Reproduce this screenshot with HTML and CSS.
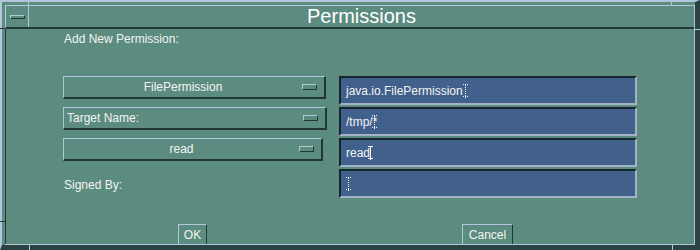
FILE: index.html
```html
<!DOCTYPE html>
<html lang="en">
<head>
  <meta charset="UTF-8" />
  <title>Permissions</title>
  <link rel="stylesheet" href="styles.css">
</head>
<body>

  <div class="frame">
    <!-- resize handle marks on the window frame -->
    <span class="notch notch-top notch-top-left"></span>
    <span class="notch notch-top notch-top-right"></span>
    <span class="notch notch-left notch-left-top"></span>
    <span class="notch notch-left notch-left-bottom"></span>
    <span class="notch notch-right notch-right-top"></span>
    <span class="notch notch-bottom notch-bottom-left"></span>
    <span class="notch notch-bottom notch-bottom-right"></span>

    <div class="inner">
      <div class="titlebar">
        <div class="menu-btn"><span class="menu-glyph"></span></div>
        <div class="title">Permissions</div>
      </div>

      <div class="client">
        <div class="heading">Add New Permission:</div>

        <div class="form-grid">
          <div class="option option-wide">
            <span class="option-label">FilePermission</span>
            <span class="indicator"></span>
          </div>
          <div class="field">
            <span class="field-text">java.io.FilePermission</span><span class="caret dotted"></span>
          </div>

          <div class="option option-wider">
            <span class="option-label left">Target Name:</span>
            <span class="indicator"></span>
          </div>
          <div class="field">
            <span class="field-text">/tmp/*</span><span class="caret dotted overlap"></span>
          </div>

          <div class="option option-narrow">
            <span class="option-label">read</span>
            <span class="indicator"></span>
          </div>
          <div class="field">
            <span class="field-text">read</span><span class="caret solid"></span>
          </div>

          <div class="label">Signed By:</div>
          <div class="field">
            <span class="caret dotted"></span>
          </div>
        </div>

        <div class="actions">
          <button class="btn btn-ok">OK</button>
          <button class="btn btn-cancel">Cancel</button>
        </div>
      </div>
    </div>
  </div>

</body>
</html>
```

FILE: styles.css
```css
/* Basic reset */
* {
  margin: 0;
  padding: 0;
  box-sizing: border-box;
}

body {
  font-family: "Liberation Sans", Arial, sans-serif;
  color: #f4f4f4;
  background: #2c4444;
}

/* Window frame */
.frame {
  position: relative;
  width: 700px;
  height: 250px;
  border-style: solid;
  border-width: 2px 5px 5px 2px;
  border-color: #b2c6dc #2a4242 #2a4242 #b2c6dc;
  padding: 3px 0 0 3px;
  background: #5b8c7f;
}

.notch {
  position: absolute;
  display: block;
}

.notch-top {
  top: -2px;
  width: 1px;
  height: 5px;
  background: #b2c6dc;
}

.notch-top-left {
  left: 26px;
}

.notch-top-right {
  left: 669px;
}

.notch-left {
  left: -2px;
  width: 5px;
  height: 1px;
  background: #223636;
}

.notch-left-top {
  top: 26px;
}

.notch-left-bottom {
  top: 219px;
}

.notch-right {
  right: -5px;
  width: 5px;
  height: 1px;
  background: #b2c6dc;
}

.notch-right-top {
  top: 27px;
}

.notch-bottom {
  bottom: -5px;
  width: 1px;
  height: 5px;
  background: #b2c6dc;
}

.notch-bottom-left {
  left: 27px;
}

.notch-bottom-right {
  left: 670px;
}

.inner {
  height: 100%;
  display: flex;
  flex-direction: column;
  border-right: 1px solid #b2c6dc;
  border-bottom: 1px solid #b2c6dc;
}

/* Title bar */
.titlebar {
  display: flex;
  height: 24px;
  border-top: 1px solid #b2c6dc;
  border-left: 1px solid #b2c6dc;
  border-bottom: 2px solid #223636;
}

.menu-btn {
  width: 23px;
  display: flex;
  align-items: center;
  justify-content: center;
  border-right: 1px solid #b2c6dc;
}

.menu-glyph {
  width: 15px;
  height: 4px;
  border: 1px solid;
  border-color: #b2c6dc #223636 #223636 #b2c6dc;
}

.title {
  flex: 1;
  text-align: center;
  font-size: 20px;
  line-height: 21px;
  color: #ffffff;
}

/* Dialog body */
.client {
  flex: 1;
  display: flex;
  flex-direction: column;
  border-left: 1px solid #223636;
  padding: 3px 0 0 57px;
  font-size: 12px;
}

.heading {
  padding-left: 1px;
  line-height: 14px;
}

.form-grid {
  margin-top: 30px;
  display: grid;
  grid-template-columns: 264px 298px;
  grid-auto-rows: 29px;
  column-gap: 12px;
  row-gap: 2px;
}

/* Option menus */
.option {
  align-self: start;
  height: 23px;
  display: flex;
  align-items: center;
  border-style: solid;
  border-width: 1px 2px 2px 1px;
  border-color: #b2c6dc #223636 #223636 #b2c6dc;
}

.option-wide {
  width: 263px;
}

.option-wider {
  width: 264px;
}

.option-narrow {
  width: 260px;
}

.option-label {
  flex: 1;
  text-align: center;
  white-space: nowrap;
}

.option-label.left {
  text-align: left;
  padding-left: 3px;
}

.indicator {
  width: 15px;
  height: 6px;
  margin-right: 7px;
  border: 1px solid;
  border-color: #b2c6dc #223636 #223636 #b2c6dc;
}

.label {
  align-self: center;
  padding-left: 1px;
  padding-top: 3px;
}

/* Text fields */
.field {
  display: flex;
  align-items: center;
  padding-left: 5px;
  border-style: solid;
  border-width: 2px;
  border-color: #16242e #a4b2c4 #a4b2c4 #16242e;
  background: #41608b;
  white-space: nowrap;
}

.caret {
  position: relative;
  display: inline-block;
  width: 5px;
  height: 13px;
}

.caret::before {
  content: "";
  position: absolute;
  left: 2px;
  top: 0;
  width: 1px;
  height: 13px;
}

.caret.dotted::before {
  background: repeating-linear-gradient(#f4f4f4 0 1px, transparent 1px 2px);
}

.caret.dotted {
  border-top: 1px dotted #f4f4f4;
  border-bottom: 1px dotted #f4f4f4;
}

.caret.solid::before {
  background: #ffffff;
}

.caret.solid {
  border-top: 1px solid #ffffff;
  border-bottom: 1px solid #ffffff;
  margin-left: -2px;
}

.caret.overlap {
  margin-left: -5px;
}

/* Dialog buttons */
.actions {
  margin-top: auto;
  display: flex;
  padding-left: 115px;
}

.btn {
  height: 20px;
  font-family: inherit;
  font-size: 12px;
  color: #f4f4f4;
  background: transparent;
  border-style: solid;
  border-width: 1px 1px 0 1px;
  border-color: #b2c6dc #223636 #b2c6dc #b2c6dc;
}

.btn-ok {
  width: 29px;
}

.btn-cancel {
  width: 51px;
  margin-left: 255px;
}
```
